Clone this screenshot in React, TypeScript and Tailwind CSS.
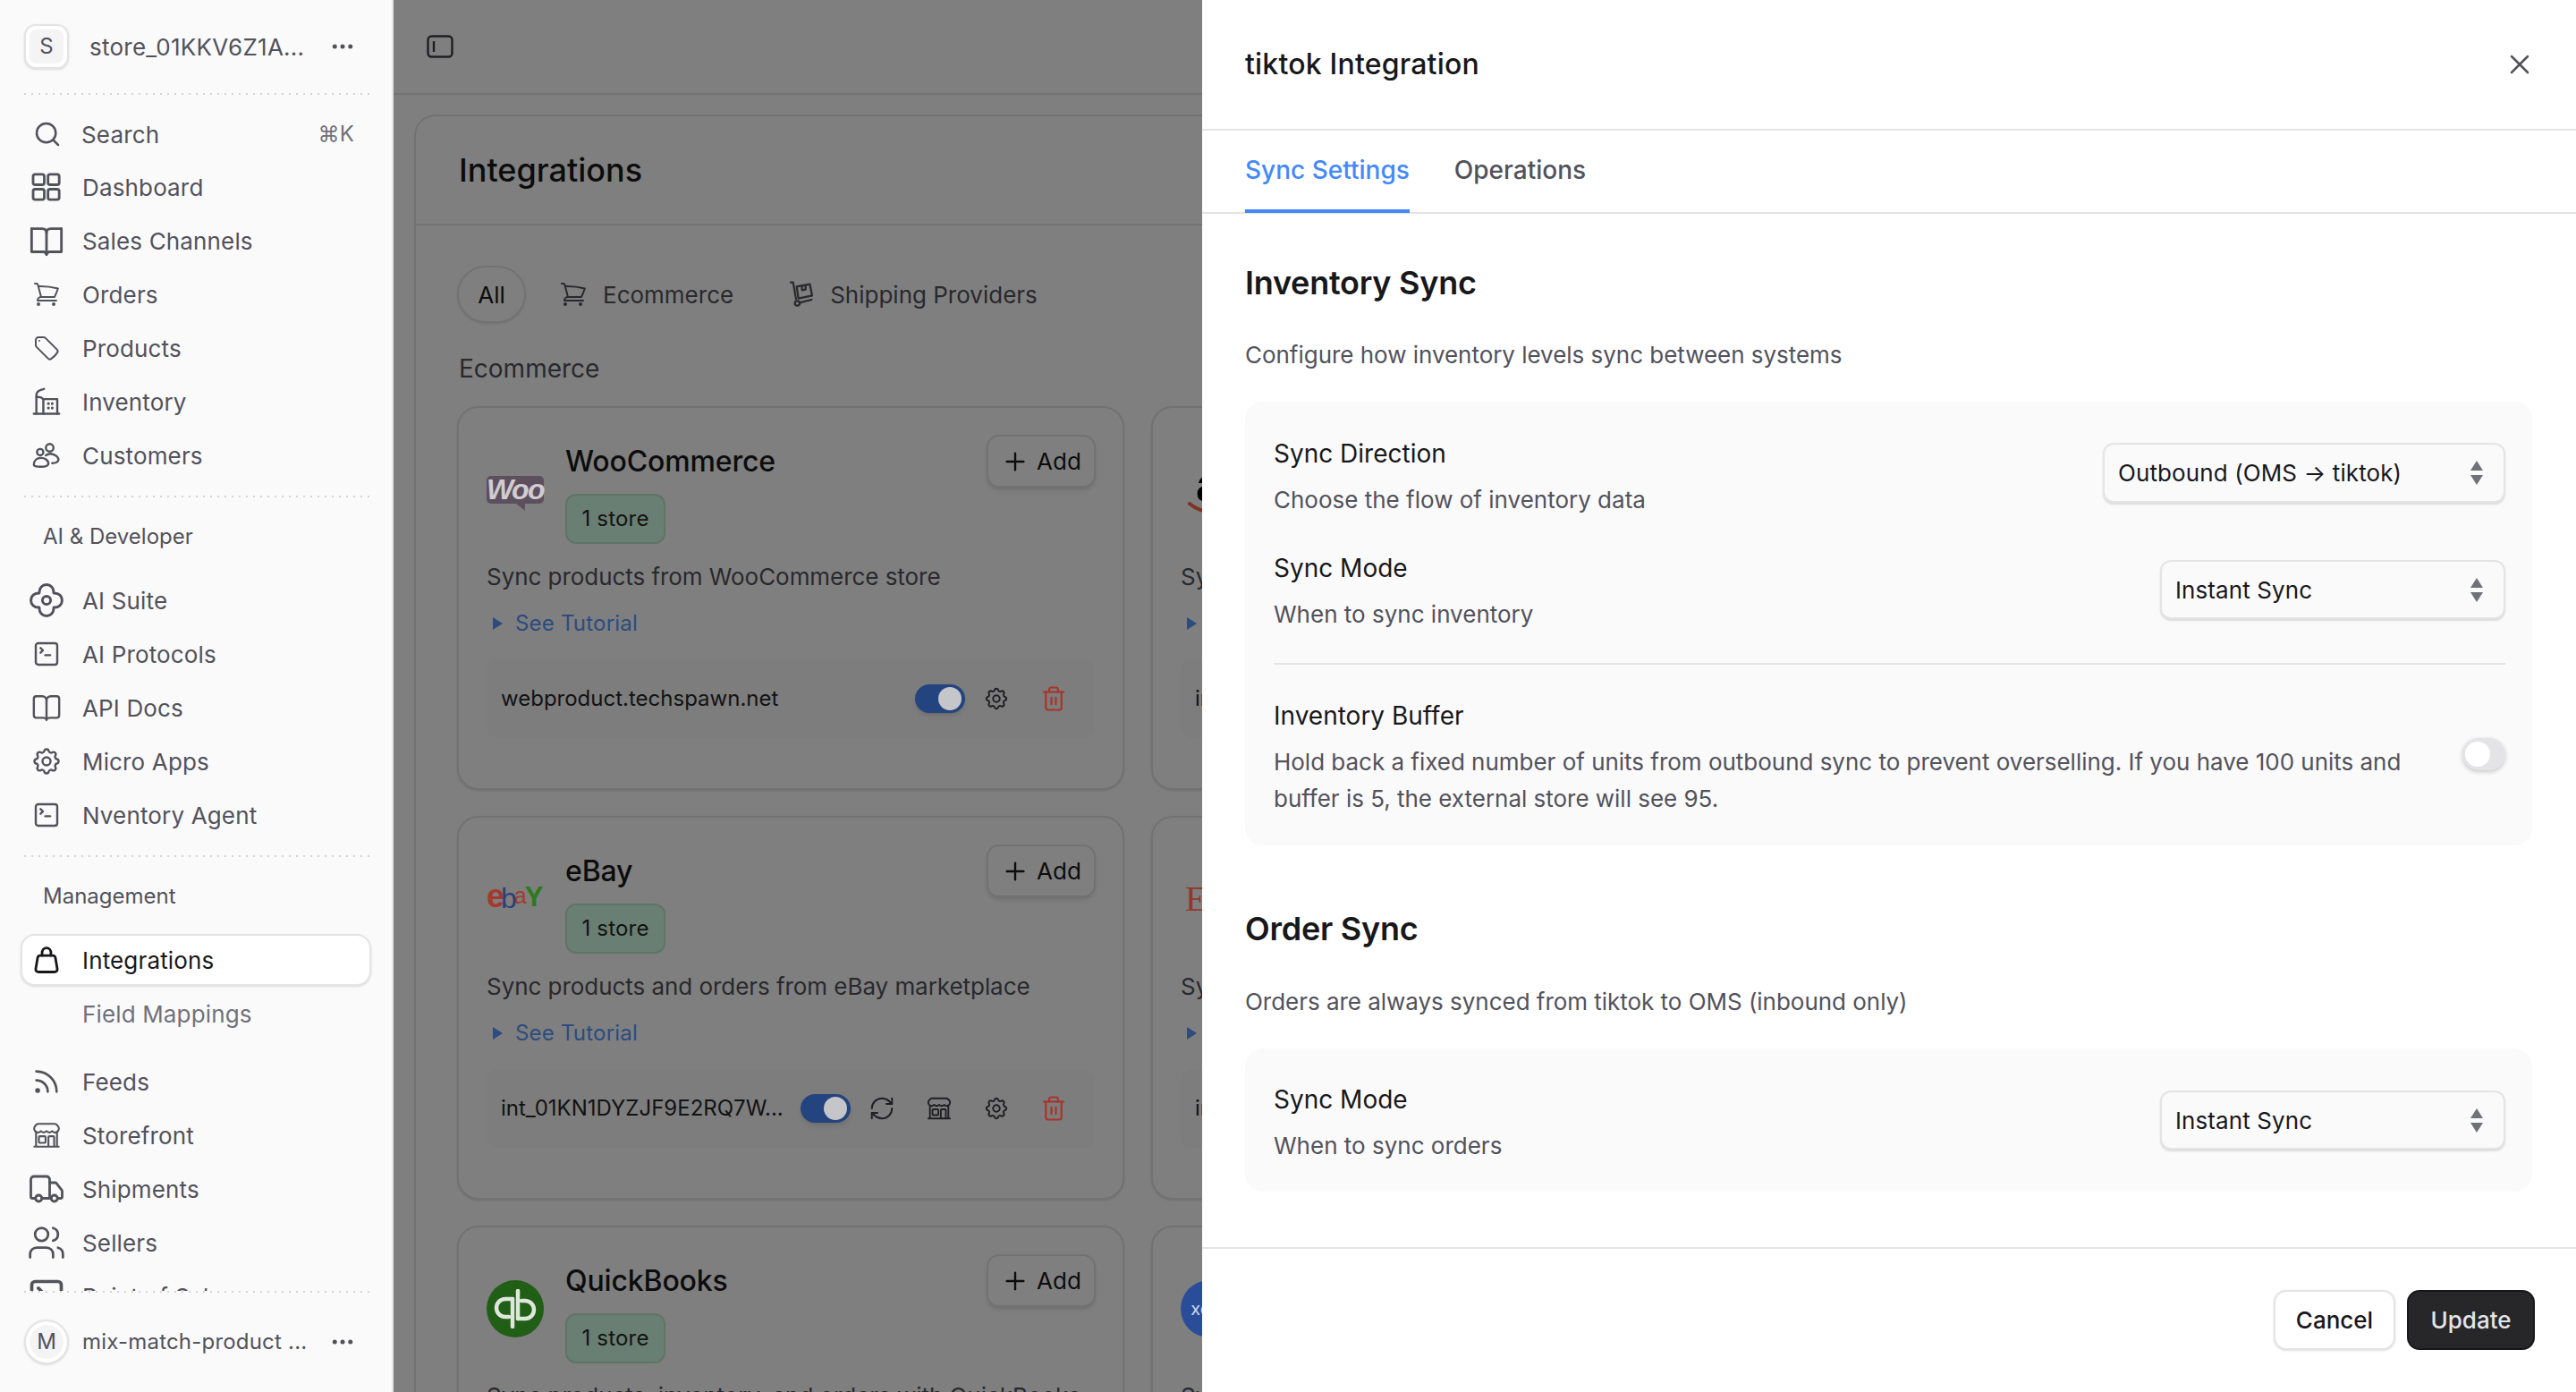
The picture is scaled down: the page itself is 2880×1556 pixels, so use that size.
import React from "react";
import { Search, Rss, X, Plus, RefreshCw, Trash2, Ellipsis, SquareTerminal, Users, Truck } from "lucide-react";
import { HiOutlineShoppingCart, HiOutlineTag, HiOutlineBuildingStorefront } from "react-icons/hi2";
import { TbSettings } from "react-icons/tb";

const FONT = "font-['Inter','Liberation_Sans',sans-serif]";

function Dots() {
  return <div className="h-[2px] w-full bg-[radial-gradient(circle,#d4d4d8_1px,transparent_1.2px)] bg-[length:8px_2px]" />;
}

function S({ w = 32, vb = "0 0 24 24", sw = 2, children }: { w?: number; vb?: string; sw?: number; children: React.ReactNode }) {
  return (
    <svg width={w} height={w} viewBox={vb} fill="none" stroke="currentColor" strokeWidth={sw} strokeLinecap="round" strokeLinejoin="round">
      {children}
    </svg>
  );
}

const DashboardIcon = () => (
  <S w={40} sw={1.7}>
    <rect x="3" y="3.500" width="7.500" height="7" rx="1.400" />
    <rect x="13" y="3.500" width="7.500" height="7" rx="1.400" />
    <rect x="3" y="13.500" width="7.500" height="7" rx="1.400" />
    <rect x="13" y="13.500" width="7.500" height="7" rx="1.400" />
  </S>
);
const SquareBook = () => (
  <S w={40} sw={1.7}>
    <path d="M2 4h7c1.800 0 3 1 3 2.800V21.500" />
    <path d="M22 4h-7c-1.800 0-3 1-3 2.800" />
    <path d="M2 4v15.500h8.500L12 21l1.500-1.500H22V4" />
  </S>
);
const InventoryIcon = () => (
  <S w={34} sw={1.7}>
    <path d="M2 21.500h20" />
    <path d="M4 21.500V7c0-2 1.500-3.500 3.500-4.200L10 2" />
    <path d="M9.500 21.500V10h11v11.500" />
    <path d="M4 8.500c2-.4 4-.2 5.500 1.500" />
    <path d="M13.500 13.500h.01M16.500 13.500h.01M13.500 17h.01M16.500 17h.01" strokeWidth={2.2} />
  </S>
);
const CustomersIcon = () => (
  <S w={34} sw={1.7}>
    <circle cx="14.500" cy="6" r="3" />
    <circle cx="7" cy="9.500" r="2.500" />
    <path d="M2 19.500c0-3.500 2.500-5.500 5.500-5.500s6 1.500 6 4.500c0 1.500-2 2.500-6 2.500s-5.500-.8-5.500-1.500z" />
    <path d="M11.500 12c2-1.500 5-1.500 7.500 0 2.500 1.500 3.500 4 1 5.500-1 .5-2.500.7-3.500.7" />
  </S>
);
const CloverIcon = () => (
  <S w={44} sw={1.600}>
    <path d="M12 2.500c2.600 0 4.400 2 4.400 4.700 0 .2 0 .3 0 .4.100 0 .3 0 .4 0 2.700 0 4.700 1.800 4.700 4.400s-2 4.400-4.700 4.400h-.4v.4c0 2.700-1.800 4.700-4.400 4.700s-4.400-2-4.400-4.700v-.4h-.4c-2.700 0-4.700-1.800-4.700-4.400s2-4.400 4.700-4.400h.4v-.4c0-2.700 1.800-4.700 4.400-4.700z" />
    <circle cx="12" cy="12" r="2.500" />
  </S>
);
const RoundBook = () => (
  <S w={34} sw={1.7}>
    <path d="M12 6.500C12 4.500 10.500 3 8.500 3H4c-1.200 0-2 .8-2 2v13c0 1.200.8 2 2 2h5c1.500 0 3 .5 3 1.500 0-1 1.500-1.500 3-1.500h5c1.200 0 2-.8 2-2V5c0-1.200-.8-2-2-2h-4.500C13.500 3 12 4.500 12 6.500z" />
    <path d="M12 6.500v15" />
  </S>
);
const BagIcon = () => (
  <S w={34} sw={2}>
    <path d="M7 8.500h10c1 0 1.800.7 2 1.800l1.500 8.700c.2 1.500-.8 2.500-2.200 2.500H5.700c-1.400 0-2.400-1-2.200-2.500L5 10.300c.2-1.100 1-1.800 2-1.800z" />
    <path d="M8.500 8.500V6.500C8.500 4.300 10 2.500 12 2.500s3.500 1.800 3.500 4V8.500" />
  </S>
);
const ShippingIcon = () => (
  <S w={32} sw={1.7}>
    <path d="M3 2h2l2.500 14" />
    <circle cx="8.500" cy="19.500" r="2" />
    <path d="M10.500 19l10-2.500" />
    <path d="M8 5.500l11-2 2 9.500-11.500 2.500z" />
    <path d="M12.500 5v3.500l3-.5V4.500" />
  </S>
);

function Row({ icon, label, className = "" }: { icon?: React.ReactNode; label: string; className?: string }) {
  return (
    <div className={`flex h-[60px] items-center pl-[30px] text-[26px] tracking-[0.15px] text-[#52525b] ${className}`}>
      <div className="flex w-[44px] items-center justify-center">{icon}</div>
      <span className="ml-[18px]">{label}</span>
    </div>
  );
}

function Sidebar() {
  return (
    <aside className="flex h-full w-[440px] shrink-0 flex-col border-r-2 border-[#e4e4e7] bg-[#fafafa]">
      <div className="flex h-[104px] shrink-0 items-center pl-[27px]">
        <div className="flex h-[50px] w-[50px] items-center justify-center rounded-[13px] border-2 border-[#e4e4e7] bg-white p-[4px] shadow-sm">
          <div className="flex h-full w-full items-center justify-center rounded-[8px] bg-[#f4f4f5] text-[24px] text-[#52525b]">S</div>
        </div>
        <span className="ml-[23px] text-[26px] tracking-[0.25px] text-[#52525b]">store_01KKV6Z1A...</span>
        <Ellipsis size={30} className="ml-auto mr-[40px] text-[#52525b]" />
      </div>
      <div className="px-[24px]"><Dots /></div>
      <div className="min-h-0 flex-1 overflow-hidden">
        <div className="mt-[14px] flex h-[60px] items-center pl-[31px] text-[26px] tracking-[0.15px] text-[#52525b]">
          <div className="flex w-[44px] items-center justify-center"><Search size={32} strokeWidth={1.9} /></div>
          <span className="ml-[16px]">Search</span>
          <span className="ml-auto mr-[42px] text-[24px] text-[#71717a]">⌘K</span>
        </div>
        <div className="-mt-[1px]">
          <Row icon={<DashboardIcon />} label="Dashboard" />
          <Row icon={<SquareBook />} label="Sales Channels" />
          <Row icon={<HiOutlineShoppingCart size={32} />} label="Orders" />
          <Row icon={<HiOutlineTag size={32} />} label="Products" />
          <Row icon={<InventoryIcon />} label="Inventory" />
          <Row icon={<CustomersIcon />} label="Customers" />
        </div>
        <div className="mt-[15px] px-[24px]"><Dots /></div>
        <div className="mt-[24px] flex h-[40px] items-center pl-[48px] text-[24px] text-[#52525b]">AI &amp; Developer</div>
        <div className="mt-[21px]">
          <Row icon={<CloverIcon />} label="AI Suite" />
          <Row icon={<SquareTerminal size={32} strokeWidth={1.8} />} label="AI Protocols" />
          <Row icon={<RoundBook />} label="API Docs" />
          <Row icon={<TbSettings size={36} strokeWidth={1.6} />} label="Micro Apps" />
          <Row icon={<SquareTerminal size={32} strokeWidth={1.8} />} label="Nventory Agent" />
        </div>
        <div className="mt-[15px] px-[24px]"><Dots /></div>
        <div className="mt-[24px] flex h-[40px] items-center pl-[48px] text-[24px] text-[#52525b]">Management</div>
        <div className="mx-[23px] mt-[22px] flex h-[58px] items-center rounded-[16px] border-2 border-[#e4e4e7] bg-white pl-[5px] text-[26px] tracking-[0.15px] text-[#18181b] shadow-sm">
          <div className="flex w-[44px] items-center justify-center"><BagIcon /></div>
          <span className="ml-[18px]">Integrations</span>
        </div>
        <Row label="Field Mappings" className="mt-[1px] !text-[#71717a]" />
        <div className="mt-[16px]">
          <Row icon={<Rss size={34} strokeWidth={1.9} />} label="Feeds" />
          <Row icon={<HiOutlineBuildingStorefront size={34} />} label="Storefront" />
          <Row icon={<Truck size={42} strokeWidth={1.6} />} label="Shipments" />
          <Row icon={<Users size={46} strokeWidth={1.5} />} label="Sellers" />
          <Row icon={<SquareTerminal size={44} />} label="Point of Sale" />
        </div>
      </div>
      <div className="px-[24px]"><Dots /></div>
      <div className="flex h-[111px] shrink-0 items-center pb-[2px] pl-[27px]">
        <div className="flex h-[50px] w-[50px] items-center justify-center rounded-full border-2 border-[#e4e4e7] bg-white p-[4px] shadow-sm">
          <div className="flex h-full w-full items-center justify-center rounded-full bg-[#f4f4f5] text-[24px] text-[#52525b]">M</div>
        </div>
        <span className="ml-[15px] text-[24px] tracking-[0.2px] text-[#52525b]">mix-match-product ...</span>
        <Ellipsis size={30} className="ml-auto mr-[40px] text-[#52525b]" />
      </div>
    </aside>
  );
}

function Toggle() {
  return (
    <div className="flex h-[32px] w-[56px] shrink-0 items-center justify-end rounded-full bg-[#4888ff] pr-[4px] shadow-md">
      <div className="relative z-10 h-[26px] w-[26px] rounded-full bg-[#c4c6c9]" />
    </div>
  );
}

function WooLogo() {
  return (
    <div className="relative z-10 flex h-[31px] w-[64px] shrink-0 items-center justify-center rounded-[5px] bg-[#5d4f5d]">
      <span className="font-['Liberation_Sans',sans-serif] text-[32px] font-bold italic leading-none tracking-[-1.500px] text-[#d0ccd0]">Woo</span>
      <div className="absolute top-full left-[33px] h-0 w-0 border-t-[8px] border-l-[10px] border-t-[#5d4f5d] border-l-transparent" />
    </div>
  );
}
function EbayLogo() {
  return (
    <div className="relative z-10 flex h-[30px] w-[64px] shrink-0 items-end font-['Liberation_Sans',sans-serif] font-bold leading-none">
      <span className="text-[36px] tracking-[-4px] text-[#a33a2c]">e</span>
      <span className="text-[32px] font-normal tracking-[-3px] text-[#2b3f7a]">b</span>
      <span className="relative -top-[6px] text-[25px] font-normal tracking-[-2px] text-[#a33a2c]">a</span>
      <span className="relative -top-[2px] text-[31px] tracking-[0px] text-[#2e7a1c]">Y</span>
    </div>
  );
}
function QbLogo() {
  return (
    <div className="relative z-10 flex h-[64px] w-[64px] shrink-0 items-center justify-center rounded-full bg-[#215e16]">
      <svg width="50" height="44" viewBox="0 0 50 44" fill="none" stroke="#dfe7dc" strokeWidth="4.500" strokeLinecap="round">
        <path d="M22 11h-8a10 10 0 0 0 0 20h4" />
        <path d="M22 11v31" />
        <path d="M28 33h8a10 10 0 0 0 0-20h-4" />
        <path d="M28 2v31" />
      </svg>
    </div>
  );
}
function AmazonLogo() {
  return (
    <div className="relative flex h-[56px] w-[64px] justify-center">
      <span className="font-['Liberation_Sans',sans-serif] text-[54px] font-bold leading-[44px] text-black">a</span>
      <svg width="60" height="14" viewBox="0 0 60 14" fill="none" className="absolute bottom-0 left-[8px]">
        <path d="M2 2c14 12 36 12 54 2" stroke="#ff6848" strokeWidth="4" strokeLinecap="round" />
      </svg>
    </div>
  );
}

function Card({ logo, title, desc, rowText, extra }: { logo: React.ReactNode; title: string; desc: string; rowText: string; extra?: boolean }) {
  return (
    <div className="flex h-[429px] flex-col overflow-hidden rounded-[24px] border-2 border-[#e4e4e7] bg-white px-[31px] pt-[30px] shadow-sm">
      <div className="flex items-start justify-between">
        <div className="flex items-center gap-[24px]">
          <div className="flex w-[64px] justify-center">{logo}</div>
          <div>
            <div className="flex h-[60px] items-center text-[32px] font-medium tracking-[-0.15px] text-[#18181b]">{title}</div>
            <div className="mt-[6px] flex h-[56px] w-[112px] items-center justify-center rounded-[12px] border-2 border-[#bde9cd] bg-[#d4ffe6] text-[24px] tracking-[0.2px] text-[#27272a]">1 store</div>
          </div>
        </div>
        <div className="-mr-[1px] flex h-[59px] w-[122px] items-center justify-center gap-[8px] rounded-[14px] border-2 border-[#e4e4e7] bg-white text-[26px] text-[#18181b] shadow-md">
          <Plus size={32} strokeWidth={1.8} />
          <span>Add</span>
        </div>
      </div>
      <div className="mt-[16px] flex h-[40px] items-center whitespace-nowrap text-[26px] tracking-[-0.05px] text-[#52525b]">{desc}</div>
      <div className="mt-[13px] flex h-[40px] items-center pl-[7px] text-[24px] tracking-[0.2px] text-[#5898ff]">
        <span className="h-0 w-0 border-y-[7px] border-l-[11px] border-y-transparent border-l-[#5898ff]" />
        <span className="ml-[14px]">See Tutorial</span>
      </div>
      <div className="mt-[20px] flex h-[88px] items-center rounded-[12px] bg-[#fafafa] pr-[31px] pl-[16px]">
        <span className="min-w-0 flex-1 whitespace-nowrap text-[24px] text-[#27272a]">{rowText}</span>
        <Toggle />
        <div className="ml-[20px] flex items-center gap-[34px]">
          {extra && (
            <>
              <div className="flex w-[30px] justify-center text-[#3f3f46]"><RefreshCw size={36} strokeWidth={1.6} /></div>
              <div className="flex w-[30px] justify-center text-[#3f3f46]"><HiOutlineBuildingStorefront size={36} /></div>
            </>
          )}
          <div className="flex w-[30px] justify-center text-[#3f3f46]"><TbSettings size={38} strokeWidth={1.6} /></div>
          <div className="relative z-10 flex w-[30px] justify-center text-[#a83328]"><Trash2 size={34} strokeWidth={1.7} /></div>
        </div>
      </div>
    </div>
  );
}

/* A card of the second column: only its left edge shows beside the drawer. */
function SideCard({ logo, tutorial = true }: { logo: React.ReactNode; tutorial?: boolean }) {
  return (
    <div className="flex h-[429px] flex-col overflow-hidden rounded-[24px] border-2 border-[#e4e4e7] bg-white px-[31px] pt-[30px] shadow-sm">
      <div className="flex h-[122px] w-[64px] items-center justify-start">{logo}</div>
      <div className="mt-[16px] flex h-[40px] items-center text-[26px] text-[#52525b]">Sync</div>
      <div className="mt-[13px] flex h-[40px] items-center pl-[7px]">
        {tutorial && <span className="h-0 w-0 border-y-[7px] border-l-[11px] border-y-transparent border-l-[#5898ff]" />}
      </div>
      <div className="mt-[20px] flex h-[88px] items-center rounded-[12px] bg-[#fafafa] pl-[16px] text-[24px] text-[#27272a]">int</div>
    </div>
  );
}

function Main() {
  return (
    <main className="relative min-w-0 flex-1 bg-white">
      <div className="flex h-[106px] items-center border-b-2 border-[#e4e4e7] pl-[37px]">
        <svg width="30" height="26" viewBox="0 0 30 26" fill="none" stroke="#3f3f46" strokeWidth="2.400">
          <rect x="1.500" y="1.500" width="27" height="23" rx="4" />
          <path d="M8 7v12" />
        </svg>
      </div>
      <div className="mx-[23px] mt-[22px] rounded-[24px] border-2 border-[#e4e4e7] bg-white">
        <div className="flex h-[122px] items-center border-b-2 border-[#e4e4e7] pl-[48px] text-[36px] font-medium text-[#18181b]">Integrations</div>
        <div className="px-[46px] pt-[45px]">
          <div className="flex h-[64px] items-center text-[26px] text-[#52525b]">
            <div className="flex h-[64px] w-[77px] items-center justify-center rounded-full border-2 border-[#e4e4e7] text-[#18181b] shadow-sm">All</div>
            <HiOutlineShoppingCart size={32} className="ml-[37px]" />
            <span className="ml-[17px]">Ecommerce</span>
            <div className="ml-[60px] flex"><ShippingIcon /></div>
            <span className="ml-[16px]">Shipping Providers</span>
          </div>
          <div className="mt-[31px] flex h-[40px] items-center pl-[2px] text-[28px] text-[#52525b]">Ecommerce</div>
          <div className="mt-[22px] grid grid-cols-[746px_746px] gap-x-[30px] gap-y-[29px]">
            <Card logo={<WooLogo />} title="WooCommerce" desc="Sync products from WooCommerce store" rowText="webproduct.techspawn.net" />
            <SideCard logo={<AmazonLogo />} />
            <Card logo={<EbayLogo />} title="eBay" desc="Sync products and orders from eBay marketplace" rowText="int_01KN1DYZJF9E2RQ7W..." extra />
            <SideCard logo={<span className="relative z-10 ml-[5px] font-['Liberation_Serif',serif] text-[40px] leading-none text-[#92372a]">Etsy</span>} />
            <Card logo={<QbLogo />} title="QuickBooks" desc="Sync products, inventory, and orders with QuickBooks" rowText="int_01" />
            <SideCard logo={<div className="relative z-10 flex h-[64px] w-[64px] shrink-0 items-center justify-center rounded-full bg-[#2a4d9a] text-[20px] text-[#cfd8ee]">xero</div>} />
          </div>
        </div>
      </div>
      <div className="absolute inset-0 bg-black/50" />
    </main>
  );
}

function Select({ text, w, mt, h }: { text: string; w: string; mt: string; h: string }) {
  return (
    <div className={`flex shrink-0 items-center justify-between rounded-[12px] border-2 border-[#e4e4e7] bg-[#fafafa] pl-[15px] pr-[23px] text-[26px] tracking-[0.1px] text-[#18181b] shadow-[0_2px_2px_rgba(0,0,0,0.12)] ${w} ${mt} ${h}`}>
      <span>{text}</span>
      <span className="flex flex-col items-center gap-[5px]">
        <span className="h-0 w-0 border-x-[7px] border-b-[11px] border-x-transparent border-b-[#71717a]" />
        <span className="h-0 w-0 border-x-[7px] border-t-[11px] border-x-transparent border-t-[#71717a]" />
      </span>
    </div>
  );
}

function Text({ title, desc }: { title: string; desc: string }) {
  return (
    <div>
      <div className="flex h-[40px] items-center text-[28px] text-[#18181b]">{title}</div>
      <div className="mt-[11px] flex h-[40px] items-center text-[26px] text-[#52525b]">{desc}</div>
    </div>
  );
}

function Drawer() {
  return (
    <section className="absolute inset-y-0 right-0 z-20 flex w-[1536px] flex-col bg-white">
      <div className="flex h-[146px] shrink-0 items-center justify-between border-b-2 border-[#e4e4e7] pl-[48px] pr-[45px]">
        <h2 className="text-[32px] font-medium tracking-[0.2px] text-[#18181b]">tiktok Integration</h2>
        <X size={36} strokeWidth={1.7} className="text-[#52525b]" />
      </div>
      <div className="flex h-[93px] shrink-0 border-b-2 border-[#e4e4e7] pl-[48px] text-[28px] font-medium">
        <div className="flex h-[92px] items-center border-b-[4px] border-[#4589f8] text-[#4589f8]">Sync Settings</div>
        <div className="ml-[50px] flex h-[92px] items-center pb-[4px] text-[#52525b]">Operations</div>
      </div>
      <div className="min-h-0 flex-1 overflow-hidden pl-[48px] pr-[49px]">
        <h3 className="mt-[53px] flex h-[48px] items-center text-[36px] font-semibold tracking-[-0.25px] text-[#18181b]">Inventory Sync</h3>
        <p className="mt-[36px] flex h-[40px] items-center text-[26px] tracking-[-0.03px] text-[#52525b]">Configure how inventory levels sync between systems</p>
        <div className="mt-[33px] rounded-[20px] bg-[#fafafa] pb-[32px] pl-[32px] pr-[30px] pt-[38px]">
          <div className="flex items-start justify-between">
            <Text title="Sync Direction" desc="Choose the flow of inventory data" />
            <Select text="Outbound (OMS → tiktok)" w="w-[450px]" mt="mt-[8px]" h="h-[67px]" />
          </div>
          <div className="mt-[37px] flex items-start justify-between">
            <Text title="Sync Mode" desc="When to sync inventory" />
            <Select text="Instant Sync" w="w-[386px]" mt="mt-[11px]" h="h-[66px]" />
          </div>
          <div className="mt-[35px] h-[2px] bg-[#e4e4e7]" />
          <div className="mt-[37px] flex items-start justify-between">
            <div>
              <div className="flex h-[40px] items-center text-[28px] text-[#18181b]">Inventory Buffer</div>
              <p className="mt-[11px] w-[1290px] text-[26px] leading-[41px] tracking-[-0.02px] text-[#52525b]">Hold back a fixed number of units from outbound sync to prevent overselling. If you have 100 units and buffer is 5, the external store will see 95.</p>
            </div>
            <div className="mt-[45px] flex h-[36px] w-[48px] shrink-0 items-center rounded-full bg-[#e4e4e7] pl-[3px] shadow-[0_2px_5px_rgba(0,0,0,0.2)]">
              <div className="h-[28px] w-[28px] rounded-full bg-white" />
            </div>
          </div>
        </div>
        <h3 className="mt-[69px] flex h-[48px] items-center text-[36px] font-semibold tracking-[-0.25px] text-[#18181b]">Order Sync</h3>
        <p className="mt-[37px] flex h-[40px] items-center text-[26px] tracking-[-0.03px] text-[#52525b]">Orders are always synced from tiktok to OMS (inbound only)</p>
        <div className="mt-[33px] flex items-start justify-between rounded-[20px] bg-[#fafafa] pb-[32px] pl-[32px] pr-[30px] pt-[37px]">
          <Text title="Sync Mode" desc="When to sync orders" />
          <Select text="Instant Sync" w="w-[386px]" mt="mt-[10px]" h="h-[66px]" />
        </div>
      </div>
      <div className="flex h-[162px] shrink-0 items-start justify-end gap-[13px] border-t-2 border-[#e4e4e7] pr-[46px] pt-[46px]">
        <div className="flex h-[67px] w-[136px] items-center justify-center rounded-[14px] border-2 border-[#e4e4e7] bg-white text-[26px] font-medium text-[#18181b] shadow-sm">Cancel</div>
        <div className="flex h-[67px] w-[143px] items-center justify-center rounded-[14px] border-2 border-[#18181b] bg-[#27272a] text-[26px] font-medium text-[#e4e4e7]">Update</div>
      </div>
    </section>
  );
}

export default function App() {
  return (
    <div className={`relative flex h-[1556px] w-[2880px] overflow-hidden bg-white ${FONT}`}>
      <Sidebar />
      <Main />
      <Drawer />
    </div>
  );
}
